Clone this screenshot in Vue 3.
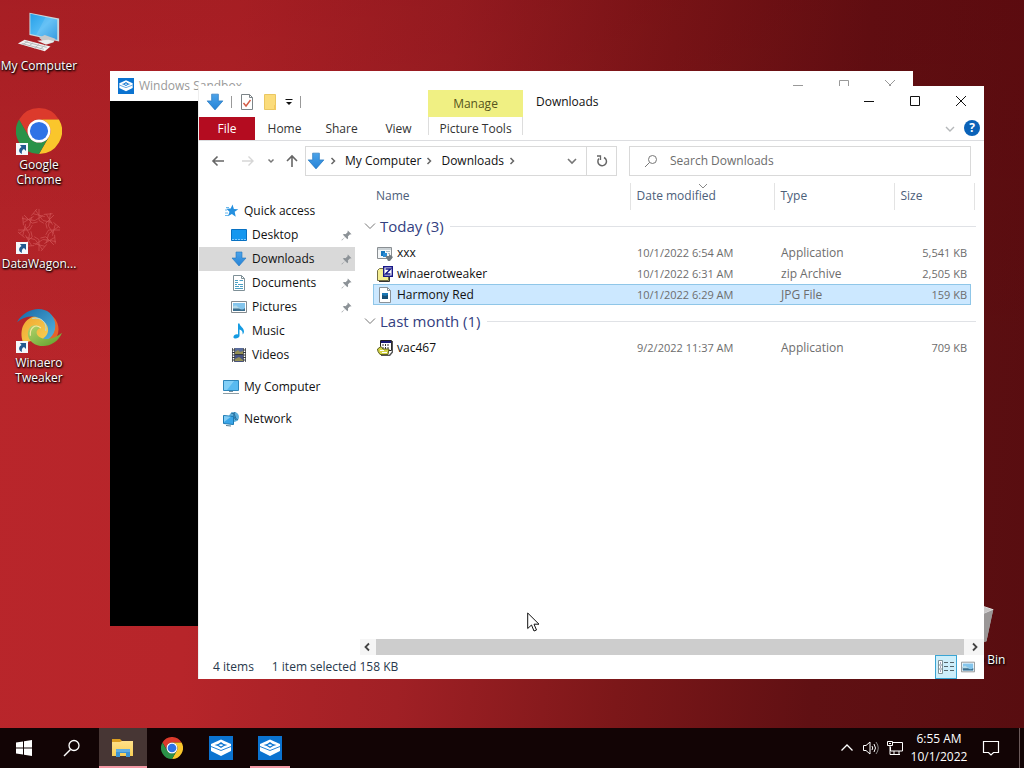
<script setup>
import { ref } from 'vue'

const query = ref('')

const shortcuts = [
  { icon: 'computer', label: 'My Computer', link: false },
  { icon: 'chrome', label: 'Google Chrome', link: true },
  { icon: 'lattice', label: 'DataWagon...', link: true },
  { icon: 'swirl', label: 'Winaero Tweaker', link: true },
]

const quick = [
  { icon: 'desk', label: 'Desktop', pinned: true },
  { icon: 'down', label: 'Downloads', pinned: true, current: true },
  { icon: 'docs', label: 'Documents', pinned: true },
  { icon: 'pics', label: 'Pictures', pinned: true },
  { icon: 'music', label: 'Music' },
  { icon: 'video', label: 'Videos' },
]

const groups = [
  {
    title: 'Today (3)',
    files: [
      { icon: 'program', name: 'xxx', date: '10/1/2022 6:54 AM', type: 'Application', size: '5,541 KB' },
      { icon: 'zip', name: 'winaerotweaker', date: '10/1/2022 6:31 AM', type: 'zip Archive', size: '2,505 KB' },
      { icon: 'jpg', name: 'Harmony Red', date: '10/1/2022 6:29 AM', type: 'JPG File', size: '159 KB', selected: true },
    ],
  },
  {
    title: 'Last month (1)',
    files: [
      { icon: 'setup', name: 'vac467', date: '9/2/2022 11:37 AM', type: 'Application', size: '709 KB' },
    ],
  },
]

const tasks = [
  { icon: 'folder', label: 'File Explorer', state: 'active' },
  { icon: 'chrome', label: 'Google Chrome', state: '' },
  { icon: 'sandbox', label: 'Windows Sandbox', state: '' },
  { icon: 'sandbox', label: 'Windows Sandbox window', state: 'open' },
]

const spokes = [0, 45, 90, 135, 180, 225, 270, 315]
</script>

<template>
  <div class="screen">
    <svg class="defs" aria-hidden="true">
      <defs>
        <linearGradient id="gScreen" x1="0" y1="0" x2="1" y2="1">
          <stop offset="0" stop-color="#27a0e8" /><stop offset=".5" stop-color="#52baf5" /><stop offset="1" stop-color="#1c8fdc" />
        </linearGradient>
        <linearGradient id="gDown" x1="0" y1="0" x2="0" y2="1">
          <stop offset="0" stop-color="#4ba3ea" /><stop offset="1" stop-color="#2683d6" />
        </linearGradient>
        <linearGradient id="gFolder" x1="0" y1="0" x2="0" y2="1">
          <stop offset="0" stop-color="#ffe08a" /><stop offset="1" stop-color="#f8cf55" />
        </linearGradient>
        <linearGradient id="gBlue" x1="0" y1="0" x2="1" y2="1">
          <stop offset="0" stop-color="#1566a4" /><stop offset="1" stop-color="#55b4de" />
        </linearGradient>
        <linearGradient id="gYellow" x1="0" y1="0" x2="1" y2="1">
          <stop offset="0" stop-color="#f0a52e" /><stop offset="1" stop-color="#f8da5c" />
        </linearGradient>
        <linearGradient id="gGreen" x1="0" y1="0" x2="1" y2="1">
          <stop offset="0" stop-color="#b4d56f" /><stop offset="1" stop-color="#5e9e27" />
        </linearGradient>

        <symbol id="computer" viewBox="0 0 48 48">
          <path d="M14 4l31 6v24L14 27z" fill="#c9d6dc" />
          <path d="M15 5l28 6v21l-28-6z" fill="url(#gScreen)" />
          <path d="M31 8l12 3v21l-22-5z" fill="#fff" opacity=".12" />
          <path d="M24 30l6-3 11 4-2 4-7 2z" fill="#c7c9ca" />
          <path d="M22 33l12-1 6 2-9 3z" fill="#eceeee" />
          <path d="M2 36l7-4 27 7-6 5z" fill="#f2f2f2" />
          <path d="M6 36l23 6M9 34l23 6M12 34l-5 3M18 35l-5 4M24 37l-5 4M30 38l-5 4" stroke="#b5b9ba" fill="none" />
        </symbol>

        <symbol id="chrome" viewBox="0 0 48 48">
          <path d="M3.2 12A24 24 0 0 1 44.8 12H24A12 12 0 0 0 13.6 30Z" fill="#dc3a2c" />
          <path d="M44.8 12A24 24 0 0 1 24 48L34.4 30A12 12 0 0 0 24 12Z" fill="#fac62c" />
          <path d="M24 48A24 24 0 0 1 3.2 12L13.6 30A12 12 0 0 0 34.4 30Z" fill="#2b9248" />
          <circle cx="24" cy="24" r="12" fill="#fff" />
          <circle cx="24" cy="24" r="9.5" fill="#2f73e6" />
        </symbol>

        <symbol id="lattice" viewBox="0 0 48 48">
          <g fill="none" stroke="#e46f6f" stroke-width=".8" opacity=".6">
            <g v-for="angle in spokes" :key="angle" :transform="`rotate(${angle} 24 24)`">
              <path d="M24 14V2M18 7l12 3M20 14l8-5M20 3l8 11M24 14l5 3M16 9l6-7" />
            </g>
          </g>
        </symbol>

        <symbol id="swirl" viewBox="0 0 48 48">
          <path d="M36 9c9 6 11 17 5 26-4 5-10 7-16 6 10-6 13-15 7-26z" fill="#e4642a" />
          <path d="M9 42C3 30 5 16 18 11c12-4 20 2 22 14-4 10-12 14-20 12-5-1-9 0-11 5z" fill="url(#gYellow)" />
          <path d="M1 17C8 4 25-1 35 7c8 7 8 20 0 27-3 1-5 1-7 0 7-4 7-12 2-17C23 9 10 9 1 17z" fill="url(#gBlue)" />
          <path d="M48 28C43 41 27 46 17 38c-6-5-6-13-1-17 4-2 8-1 10 2-5 1-6 6-2 9 7 5 17 2 24-4z" fill="url(#gGreen)" />
          <path d="M26 23c-6-5-12 0-11 8" fill="none" stroke="#f8e7a1" stroke-width="1.2" />
          <path d="M17 13c9-2 16 4 14 13" fill="none" stroke="#a9daee" />
        </symbol>

        <symbol id="bin" viewBox="0 0 48 48">
          <path d="M8 8l15-6 21 5-7 33-20 4z" fill="#aeb1b2" />
          <path d="M8 8l22 5 14-6-15-5z" fill="#c9c6c6" stroke="#e4e4e4" />
          <path d="M30 13l14-6-7 33-8 3z" fill="#9a9696" />
        </symbol>

        <symbol id="shortcut" viewBox="0 0 12 12">
          <path d="M0 0h12v12H0z" fill="#f5f8fb" />
          <path d="M4 2h6v6L8 6C6 7 5.500 8.500 6 11 2 9.500 2.500 5.500 5.500 4z" fill="#23598f" />
        </symbol>

        <symbol id="sandbox" viewBox="0 0 24 24">
          <path d="M0 0h24v24H0z" fill="#0b73d0" />
          <path d="M12 3.500l10 4.500v7l-10 5-10-5V8z" fill="#fff" />
          <path d="M2 10.500l10 4 10-4" fill="none" stroke="#0b73d0" stroke-width=".9" />
          <path d="M5.500 9Q9 9 12 6Q15 9 18.500 9Q15 9.500 12 12Q9 9.500 5.500 9z" fill="#0b73d0" />
          <path d="M9.500 9.200Q12 7.500 14.500 9.200Q13 9.500 12 10.500Q11 9.500 9.500 9.200z" fill="#fff" />
        </symbol>

        <symbol id="folder" viewBox="0 0 24 24">
          <path d="M1 3h8l2 2h11v5H1z" fill="#dc9e20" />
          <path d="M2 6h7l2-1h11v15H1V6z" fill="url(#gFolder)" />
          <path d="M5 13h14v8h-4v-4H9v4H5z" fill="#3c94d3" />
          <path d="M5 13h14v3H5z" fill="#60aee2" />
        </symbol>

        <symbol id="down" viewBox="0 0 16 16">
          <path d="M5 1h6v6h4L8 15 1 7h4z" fill="url(#gDown)" stroke="#2476bd" stroke-width=".6" />
        </symbol>
        <symbol id="star" viewBox="0 0 16 16">
          <path d="M9.500 1.500l1.400 4.400 4.400.3-3.600 2.600 1 5-3.800-2.900-4 2.400 1.600-4.600-3.300-2.900 4.500-.2z" fill="#2590df" />
          <path d="M3 4.500h3M2 7h2M2 10h3M2 12.500h3" stroke="#6ab8ec" />
        </symbol>
        <symbol id="desk" viewBox="0 0 16 16">
          <path d="M.5 2.500h15v11H.5z" fill="#1597ef" stroke="#0871c2" />
          <path d="M1 12.500h14" stroke="#83cbff" stroke-dasharray="2 1" />
        </symbol>
        <symbol id="docs" viewBox="0 0 16 16">
          <path d="M2.500.5h8l3 3v12h-11z" fill="#fff" stroke="#7f9097" />
          <path d="M10.500.5v3h3" fill="none" stroke="#7f9097" />
          <path d="M4 5.500h3M8.500 5.500H12M4 7.500h3M4 9.500h2M7 9.500h5M4 11.500h4M9 11.500h3M4 13.500h8" stroke="#4ba0c4" />
        </symbol>
        <symbol id="pics" viewBox="0 0 16 16">
          <path d="M.5 2.500h15v11H.5z" fill="#fff" stroke="#848a8e" />
          <path d="M2 4h12v8H2z" fill="#84c5ec" />
          <path d="M2 8q3-2 6 1t6 0v3H2z" fill="#3d6f8e" />
          <path d="M2 7.500q3-2 5 .5l3 1.500H2z" fill="#b5dbea" />
        </symbol>
        <symbol id="music" viewBox="0 0 16 16">
          <path d="M7 .5h1.500c.3 3 4.500 4 4.500 8-.1 1.500-.8 2.500-1.500 3 .6-3-1-4.500-3-5V13c-.2 2-5 3.500-6 1.500-.5-2 2.500-4 4.500-3z" fill="#159be2" />
        </symbol>
        <symbol id="video" viewBox="0 0 16 16">
          <path d="M1 1h14v14H1z" fill="#34383d" />
          <path d="M4 1h8v6H4z" fill="#596c9b" /><path d="M4 8h8v7H4z" fill="#465282" />
          <path d="M4 5l3-2 2 2 3-1v3H4zM4 12l4-2 4 3v1H4z" fill="#948f55" />
          <path d="M2.500 1v14M13.500 1v14" stroke="#fff" stroke-width="1.500" stroke-dasharray="1.500 1" />
        </symbol>
        <symbol id="pc" viewBox="0 0 16 16">
          <path d="M.5 1.500h15v10H.5z" fill="#58baf0" stroke="#2e86ba" />
          <path d="M1 2h10L4 11H1z" fill="#94d8fa" opacity=".7" />
          <path d="M6 12h4v1H6z" fill="#78909b" /><path d="M0 14.500h16" stroke="#8e9da4" />
        </symbol>
        <symbol id="net" viewBox="0 0 16 16">
          <circle cx="11" cy="6" r="5" fill="#5dafdc" />
          <path d="M8 2q4 0 4 3t3 4M12 1q-3 4 1 8" fill="none" stroke="#26709f" />
          <path d="M.5 4.500l10 1v8l-10-1z" fill="#39a5e8" stroke="#1b79b2" />
          <path d="M1 5l7 .700L1 11z" fill="#83ccf4" />
          <path d="M3 14.500l5 .500" stroke="#527b93" />
        </symbol>
        <symbol id="pin" viewBox="0 0 12 12">
          <path d="M7.500.5l4 4-1 .5-.6-.3-2.400 2.400c.5 1.200.2 2.300-.5 3L4.500 7.500 1 11.500.5 11l4-3.500-2.600-2.500c.7-.7 2-1 3.100-.5l2.400-2.400-.3-.7z" fill="#8c9297" />
        </symbol>
        <symbol id="program" viewBox="0 0 16 16">
          <path d="M.5 2.500h14v11H.5z" fill="#f4f7f8" stroke="#8a8f93" />
          <path d="M1 3h13v2H1z" fill="#cbd2d6" />
          <path d="M4 6h4v5H4z" fill="#1575bd" /><path d="M6 8h4v4H6z" fill="#2a8dd6" />
          <path d="M9 6.500h4M11 8.500h2" stroke="#a9bcc6" />
          <path d="M8 11h4V9l4 3-3 4h-2l-1-2z" fill="#727b81" />
        </symbol>
        <symbol id="zip" viewBox="0 0 16 16">
          <path d="M.5 4.500l2-2h5v2h4v10H.5z" fill="#f5ee91" stroke="#757043" />
          <path d="M2 15.500h10.500V11" fill="none" stroke="#333" />
          <path d="M6.700.7h8.600v9.600H6.700z" fill="#fff" stroke="#181888" stroke-width="1.400" />
          <path d="M8.500 3h5l-5 5h5" fill="none" stroke="#181888" stroke-width="1.500" />
        </symbol>
        <symbol id="jpg" viewBox="0 0 16 16">
          <path d="M2.500.5h8l3 3v12h-11z" fill="#fff" stroke="#8a9298" />
          <path d="M10.500.5v3h3" fill="none" stroke="#8a9298" />
          <path d="M5 6h6v6H5z" fill="#1c78b5" /><path d="M5 8l3 1 3-1v4H5z" fill="#174f75" />
        </symbol>
        <symbol id="setup" viewBox="0 0 16 16">
          <path d="M3.500.5h11v10h-11z" fill="#fff" stroke="#222" />
          <path d="M4 1h10v2H4z" fill="#171775" />
          <path d="M6 4v2M8.500 4v2M11 4v2M6 7v2M8.500 7v2M11 7v2" stroke="#333" />
          <path d="M15.500 1v11l-3 3.500H4" fill="none" stroke="#555" stroke-width="1.500" />
          <path d="M.5 9L4 6.500 6 9h6l-1 5.500H3l-2-3z" fill="#d4d448" stroke="#5f6120" />
          <path d="M3 10.500h4M5 12.500h5" stroke="#fff" />
        </symbol>
      </defs>
    </svg>

    <main class="desktop">
      <ul class="shortcuts">
        <li v-for="s in shortcuts" :key="s.label">
          <a href="#" class="shortcut">
            <span class="picture">
              <svg class="big"><use :href="'#' + s.icon" /></svg>
              <svg v-if="s.link" class="arrow"><use href="#shortcut" /></svg>
            </span>
            <span>{{ s.label }}</span>
          </a>
        </li>
      </ul>
      <a href="#" class="shortcut recycle">
        <span class="picture"><svg class="big"><use href="#bin" /></svg></span>
        <span>Recycle Bin</span>
      </a>

      <section class="window sandbox" aria-label="Windows Sandbox">
        <header class="sandbox-bar">
          <svg class="i16"><use href="#sandbox" /></svg>
          <span class="sandbox-title">Windows Sandbox</span>
          <button class="caption" aria-label="Minimize sandbox"><svg class="i12" viewBox="0 0 12 12"><path d="M1 5.500h10" /></svg></button>
          <button class="caption" aria-label="Maximize sandbox"><svg class="i12" viewBox="0 0 12 12"><path d="M1.500.5h9v9h-9z" /></svg></button>
          <button class="caption" aria-label="Close sandbox"><svg class="i12" viewBox="0 0 12 12"><path d="M1 0l10 10M11 0L1 10" /></svg></button>
        </header>
        <div class="sandbox-view"></div>
      </section>

      <section class="window explorer" aria-label="Downloads">
        <header class="titlebar">
          <div class="quickbar">
            <svg class="i18"><use href="#down" /></svg>
            <i class="rule"></i>
            <button aria-label="Properties"><svg class="i16" viewBox="0 0 16 16"><path d="M2.500.5h8l3 3v12h-11z" fill="#fff" stroke="#7c8488" /><path d="M10.500.5v3h3" fill="none" stroke="#7c8488" /><path d="M4.500 9l2.500 3 4.500-6" fill="none" stroke="#d25b45" stroke-width="1.400" /></svg></button>
            <button aria-label="New folder"><svg class="i16" viewBox="0 0 16 16"><path d="M2.500.5h11v15h-11z" fill="#fbdc7b" stroke="#eac762" /><path d="M12 11h2v5h-2z" fill="#f3c95f" /></svg></button>
            <button class="more" aria-label="Customize toolbar"><svg class="i8" viewBox="0 0 8 8"><path d="M.5 1.500h7" stroke="#111" /><path d="M1 4h6L4 7z" fill="#111" /></svg></button>
            <i class="rule"></i>
          </div>
          <div class="manage">Manage</div>
          <h1 class="title">Downloads</h1>
          <button class="caption" aria-label="Minimize"><svg class="i12" viewBox="0 0 12 12"><path d="M1 6.500h10" /></svg></button>
          <button class="caption" aria-label="Maximize"><svg class="i12" viewBox="0 0 12 12"><path d="M1.500 1.500h9v9h-9z" /></svg></button>
          <button class="caption" aria-label="Close"><svg class="i12" viewBox="0 0 12 12"><path d="M1 1l10 10M11 1L1 11" /></svg></button>
        </header>

        <nav class="ribbon" aria-label="Ribbon">
          <div class="tabs">
            <button class="file">File</button>
            <button>Home</button>
            <button>Share</button>
            <button>View</button>
          </div>
          <button class="tools">Picture Tools</button>
          <button class="expand" aria-label="Expand ribbon"><svg class="i10" viewBox="0 0 10 10"><path d="M1 3l4 4 4-4" fill="none" stroke="#b4b7b9" stroke-width="1.400" /></svg></button>
          <button class="help" aria-label="Help">?</button>
        </nav>

        <div class="address">
          <div class="history">
            <button aria-label="Back"><svg class="i14" viewBox="0 0 14 14"><path d="M13 7H2M6.500 2.500L2 7l4.500 4.500" fill="none" stroke="#666" stroke-width="1.600" /></svg></button>
            <button aria-label="Forward"><svg class="i14" viewBox="0 0 14 14"><path d="M1 7h11M7.500 2.500L12 7l-4.500 4.500" fill="none" stroke="#d6d6d6" stroke-width="1.400" /></svg></button>
            <button class="slim" aria-label="Recent locations"><svg class="i8" viewBox="0 0 8 8"><path d="M1.500 2.500L4 5l2.500-2.500" fill="none" stroke="#777" stroke-width="1.500" /></svg></button>
            <button aria-label="Up"><svg class="i14" viewBox="0 0 14 14"><path d="M7 13V2M2 7l5-5 5 5" fill="none" stroke="#666" stroke-width="1.600" /></svg></button>
          </div>
          <div class="path">
            <svg class="i18"><use href="#down" /></svg>
            <svg class="sep" viewBox="0 0 8 8"><path d="M2.500 1l3 3-3 3" /></svg>
            <button>My Computer</button>
            <svg class="sep" viewBox="0 0 8 8"><path d="M2.500 1l3 3-3 3" /></svg>
            <button>Downloads</button>
            <svg class="sep" viewBox="0 0 8 8"><path d="M2.500 1l3 3-3 3" /></svg>
            <button class="drop" aria-label="Previous locations"><svg class="i10" viewBox="0 0 10 10"><path d="M1 3l4 4 4-4" fill="none" stroke="#777" stroke-width="1.600" /></svg></button>
            <button class="refresh" aria-label="Refresh"><svg class="i12" viewBox="0 0 12 12"><path d="M3 3.500A4.300 4.300 0 1 0 8 2.500" fill="none" stroke="#666" stroke-width="1.500" /><path d="M1 1h3.500v4" fill="none" stroke="#666" stroke-width="1.300" /></svg></button>
          </div>
          <label class="search">
            <svg class="i14" viewBox="0 0 14 14"><circle cx="8.500" cy="5.500" r="4" fill="none" stroke="#777" /><path d="M5.500 8.500L1 13" stroke="#777" /></svg>
            <input v-model="query" type="text" placeholder="Search Downloads" aria-label="Search Downloads">
          </label>
        </div>

        <div class="content">
          <nav class="tree" aria-label="Folders">
            <a href="#" class="node"><svg class="i16"><use href="#star" /></svg>Quick access</a>
            <a v-for="q in quick" :key="q.label" href="#" class="node child" :class="{ current: q.current }">
              <svg class="i16"><use :href="'#' + q.icon" /></svg>{{ q.label }}
              <svg v-if="q.pinned" class="pin"><use href="#pin" /></svg>
            </a>
            <a href="#" class="node root"><svg class="i16"><use href="#pc" /></svg>My Computer</a>
            <a href="#" class="node root"><svg class="i16"><use href="#net" /></svg>Network</a>
          </nav>

          <div class="pane">
            <div class="listing">
              <table>
                <colgroup><col><col class="c-date"><col class="c-type"><col class="c-size"></colgroup>
                <thead>
                  <tr>
                    <th>Name</th>
                    <th>Date modified<svg class="sorted" viewBox="0 0 10 6"><path d="M1 1l4 4 4-4" fill="none" stroke="#888" /></svg></th>
                    <th>Type</th>
                    <th class="last">Size</th>
                  </tr>
                </thead>
                <tbody v-for="g in groups" :key="g.title">
                  <tr class="group">
                    <th colspan="4" scope="rowgroup">
                      <div class="group-line">
                        <svg class="i12" viewBox="0 0 12 12"><path d="M1 3.500l5 5 5-5" fill="none" stroke="#777" /></svg>{{ g.title }}
                      </div>
                    </th>
                  </tr>
                  <tr v-for="f in g.files" :key="f.name" class="file-row" :class="{ selected: f.selected }">
                    <td><div class="name"><svg class="i16"><use :href="'#' + f.icon" /></svg>{{ f.name }}</div></td>
                    <td class="date">{{ f.date }}</td>
                    <td>{{ f.type }}</td>
                    <td class="size">{{ f.size }}</td>
                  </tr>
                </tbody>
              </table>
            </div>
            <div class="scroller">
              <button aria-label="Scroll left"><svg class="i10" viewBox="0 0 10 10"><path d="M6 1.500L2.500 5 6 8.500" fill="none" stroke="#444" stroke-width="1.800" /></svg></button>
              <i class="thumb"></i>
              <button class="right" aria-label="Scroll right"><svg class="i10" viewBox="0 0 10 10"><path d="M4 1.500L7.500 5 4 8.500" fill="none" stroke="#444" stroke-width="1.800" /></svg></button>
            </div>
          </div>
        </div>

        <footer class="status">
          <span>4 items</span>
          <span class="picked">1 item selected</span>
          <span>158 KB</span>
          <button class="view on" aria-label="Details view"><svg class="i18" viewBox="0 0 18 18"><path d="M1.500 2.500h4v13h-4zM1.500 7h4M1.500 11h4" fill="#fff" stroke="#7e9197" /><path d="M3 5h1M3 9h1M3 13h1" stroke="#447" /><path d="M7 4.500h4M13 4.500h4M7 8.500h4M13 8.500h4M7 12.500h4M13 12.500h4" stroke="#55656b" /></svg></button>
          <button class="view" aria-label="Large thumbnails"><svg class="i14"><use href="#pics" /></svg></button>
        </footer>
      </section>

      <svg class="cursor" viewBox="0 0 13 20"><path d="M.7 1v15.500l3.800-3.500 2.500 6 2.500-1-2.500-5.800h5z" fill="#fff" stroke="#111" /></svg>
    </main>

    <footer class="taskbar">
      <button aria-label="Start"><svg class="i18" viewBox="0 0 18 18"><path d="M1 3.500l7-1v6H1zM9 2.300L17 1v7.500H9zM1 9.500h7v6l-7-1zM9 9.500h8V17l-8-1.300z" fill="#fff" /></svg></button>
      <button aria-label="Search"><svg class="i18" viewBox="0 0 18 18"><circle cx="11" cy="6.500" r="5" fill="none" stroke="#fff" stroke-width="1.300" /><path d="M7.500 10.500L1 17" stroke="#fff" stroke-width="1.500" /></svg></button>
      <div class="apps">
        <button v-for="t in tasks" :key="t.label" :class="t.state" :aria-label="t.label">
          <svg class="i24" :class="{ small: t.icon === 'chrome' }"><use :href="'#' + t.icon" /></svg>
        </button>
      </div>
      <div class="tray">
        <button aria-label="Hidden icons"><svg class="i14" viewBox="0 0 14 14"><path d="M1.500 9.500L7 4l5.500 5.500" fill="none" stroke="#fff" stroke-width="1.300" /></svg></button>
        <button aria-label="Volume"><svg class="i16" viewBox="0 0 16 16"><path d="M.5 5.500h2.500l4-3.500v12L3 10.500H.5z" fill="none" stroke="#fff" /><path d="M9 6q1.500 2 0 4M11 4q3 4 0 8" fill="none" stroke="#fff" /><path d="M13 2q4.500 6 0 12" fill="none" stroke="#888" /></svg></button>
        <button aria-label="Network"><svg class="i16" viewBox="0 0 16 16"><path d="M6 2.500h9.500v8.500h-12V7M7 11v3M12 11v3M4.500 14.500H13" fill="none" stroke="#fff" /><path d="M.5 1.500h5v4h-5zM2 3.500h2M3 5.500v9h3" fill="none" stroke="#fff" /></svg></button>
        <button class="clock"><span>6:55 AM</span><span>10/1/2022</span></button>
        <button class="notices" aria-label="Notifications"><svg class="i18" viewBox="0 0 18 18"><path d="M1.500 2.500h15v11h-5L9 16l-2.500-2.500h-5z" fill="none" stroke="#fff" stroke-width="1.200" /></svg></button>
        <button class="peek" aria-label="Show desktop"></button>
      </div>
    </footer>
  </div>
</template>

<style>
html, body, #app { height: 100%; }
</style>

<style scoped>
.screen {
  display: flex;
  flex-direction: column;
  height: 100%;
  overflow: hidden;
  color: #111;
  font: 12px/16px "Open Sans", "Noto Sans", sans-serif;
  background:
    linear-gradient(180deg, #60000833 0%, #60000800 50%),
    linear-gradient(95deg, #b9262b 0%, #b7252a 22%, #a02025 42%, #7c1719 62%, #601013 80%, #580d10 100%);
}
.screen * { box-sizing: border-box; }
button {
  display: flex;
  align-items: center;
  justify-content: center;
  margin: 0;
  padding: 0;
  border: 0;
  background: none;
  color: inherit;
  font: inherit;
}
a { color: inherit; text-decoration: none; }
svg { display: block; flex: none; }
.defs { position: absolute; width: 0; height: 0; }
.i8 { width: 8px; height: 8px; }
.i10 { width: 10px; height: 10px; }
.i12 { width: 12px; height: 12px; }
.i14 { width: 14px; height: 14px; }
.i16 { width: 16px; height: 16px; }
.i18 { width: 18px; height: 18px; }
.i24 { width: 24px; height: 24px; }

.desktop { position: relative; flex: 1; min-height: 0; }
.shortcuts { list-style: none; margin: 0; padding: 8px 0 0; width: 78px; }
.shortcuts li { height: 99px; }
.shortcut {
  display: flex;
  flex-direction: column;
  align-items: center;
  gap: 2px;
  width: 78px;
  color: #fff;
  line-height: 15px;
  text-align: center;
  text-shadow: 1px 1px 2px #000, 0 1px 2px #000;
}
.picture { position: relative; }
.big { width: 46px; height: 48px; }
.arrow { position: absolute; left: 0; bottom: 0; width: 12px; height: 12px; }
.recycle { position: absolute; right: 11px; bottom: 61px; }

.window { position: absolute; display: flex; flex-direction: column; background: #fff; }
.sandbox { top: 71px; right: 111px; bottom: 102px; left: 110px; }
.sandbox-bar { display: flex; align-items: center; height: 30px; padding-left: 8px; color: #999; }
.sandbox-title { flex: 1; padding-left: 5px; }
.sandbox-view { flex: 1; background: #000; }
.caption { width: 46px; height: 30px; }
.caption path { fill: none; stroke: currentColor; }

.explorer { top: 86px; right: 40px; bottom: 49px; left: 198px; border-left: 1px solid #eee; }
.titlebar { display: flex; height: 31px; }
.quickbar { display: flex; align-items: center; gap: 7px; width: 229px; padding-left: 7px; }
.rule { width: 1px; height: 12px; background: #999; }
.more { width: 8px; }
.manage { width: 95px; margin-top: 4px; background: #f0f083; color: #55551c; text-align: center; line-height: 27px; }
.title { flex: 1; margin: 0; padding-left: 13px; font-size: 12px; font-weight: 400; line-height: 31px; }

.ribbon { display: flex; height: 24px; border-bottom: 1px solid #dcdde0; color: #333; }
.tabs { display: flex; width: 229px; }
.tabs button { width: 57px; }
.tabs .file { width: 56px; margin-right: 1px; background: #b40c20; color: #fff; }
.tools { width: 95px; height: 18px; padding-top: 6px; border: solid #ddd; border-width: 0 1px; }
.expand { margin-left: auto; width: 20px; }
.help { width: 16px; height: 16px; margin: 3px 4px; border-radius: 50%; background: #0a62b8; color: #fff; font-weight: 700; }

.address { display: flex; align-items: center; height: 40px; padding-right: 13px; }
.history { display: flex; align-items: center; gap: 8px; width: 106px; padding-left: 8px; }
.history button { width: 22px; height: 24px; }
.history .slim { width: 8px; }
.history button:last-child { width: 18px; }
.path { display: flex; align-items: center; flex: 309; height: 30px; padding-left: 1px; border: 1px solid #d9d9d9; }
.sep { width: 8px; height: 8px; margin: 0 8px 0 4px; }
.sep path { fill: none; stroke: #666; stroke-width: 1.500; }
.drop { width: 28px; height: 28px; margin-left: auto; }
.refresh { width: 30px; height: 28px; border-left: 1px solid #d9d9d9; }
.search { display: flex; align-items: center; gap: 12px; flex: 326; height: 30px; margin-left: 12px; padding-left: 14px; border: 1px solid #d9d9d9; }
.search input { flex: 1; min-width: 0; padding: 0; border: 0; outline: 0; background: none; font: inherit; }
.search input::placeholder { color: #6d6d6d; opacity: 1; }

.content { display: flex; flex: 1; min-height: 0; }
.tree { width: 156px; padding-top: 18px; }
.node { display: flex; align-items: center; gap: 5px; height: 24px; padding-left: 24px; }
.child { padding: 0 3px 0 32px; }
.current { background: #d9d9d9; }
.root { margin-top: 8px; }
.pin { width: 11px; height: 11px; margin-left: auto; }
.pane { display: flex; flex: 1; flex-direction: column; min-width: 0; margin-left: 5px; }
.listing { flex: 1; min-height: 0; padding: 2px 13px 0 13px; }
table { width: 100%; table-layout: fixed; border-collapse: collapse; }
.c-date { width: 144px; }
.c-type { width: 120px; }
.c-size { width: 77px; }
th, td { padding: 0; font-weight: 400; text-align: left; white-space: nowrap; }
thead th { position: relative; height: 27px; padding: 0 0 2px 6px; border-left: 1px solid #e3e3e3; color: #4c607a; }
thead th:first-child { padding-left: 3px; border-left: 0; }
thead .last::after { content: ""; position: absolute; top: 0; right: -4px; bottom: 0; width: 1px; background: #e3e3e3; }
.sorted { position: absolute; top: 0; left: 67px; width: 10px; height: 6px; }
.group th { height: 32px; }
.group-line { display: flex; align-items: center; gap: 4px; margin: 0 -5px 0 -9px; color: #33407f; font-size: 15px; line-height: 20px; }
.group-line::after { content: ""; flex: 1; height: 1px; margin-left: 2px; background: #e0e2e6; }
.file-row td { height: 21px; padding-left: 7px; color: #6d6d6d; line-height: 20px; }
.file-row td:first-child { padding-left: 4px; color: #111; }
.file-row .date { font-size: 11px; }
.file-row .size { padding: 0 4px 0 0; font-size: 11px; text-align: right; }
.name { display: flex; align-items: center; gap: 4px; }
.selected { background: #cce8ff; outline: 1px solid #8fc6e8; outline-offset: -1px; }

.scroller { display: flex; height: 16px; background: #f5f5f5; }
.scroller button { width: 16px; }
.scroller .right { width: 20px; }
.thumb { flex: 1; background: #cdcdcd; }
.status { display: flex; align-items: center; height: 24px; padding: 0 5px 0 14px; color: #27384c; }
.picked { padding: 0 3px 0 18px; }
.view { width: 22px; height: 24px; }
.view.on { margin-left: auto; border: 1px solid #3aa5d4; background: #cdeefa; }
.cursor { position: absolute; left: 527px; top: 612px; width: 13px; height: 20px; }

.taskbar { display: flex; height: 40px; background: #120405; color: #fff; }
.taskbar > button { width: 48px; }
.apps { display: flex; gap: 1px; margin-left: 3px; }
.apps button { position: relative; width: 48px; }
.apps .small { width: 22px; height: 22px; }
.apps .active { background: #473634; }
.apps .active::after, .apps .open::after { content: ""; position: absolute; bottom: 0; height: 2px; background: #f398a4; }
.apps .active::after { right: 0; left: 0; }
.apps .open::after { right: 4px; left: 4px; }
.tray { display: flex; margin-left: auto; }
.tray button { width: 24px; }
.tray .clock { flex-direction: column; width: 64px; line-height: 18px; font-size: 12px; }
.tray .notices { width: 40px; }
.tray .peek { width: 5px; margin-left: 8px; border-left: 1px solid #6b5a5a; }
</style>
